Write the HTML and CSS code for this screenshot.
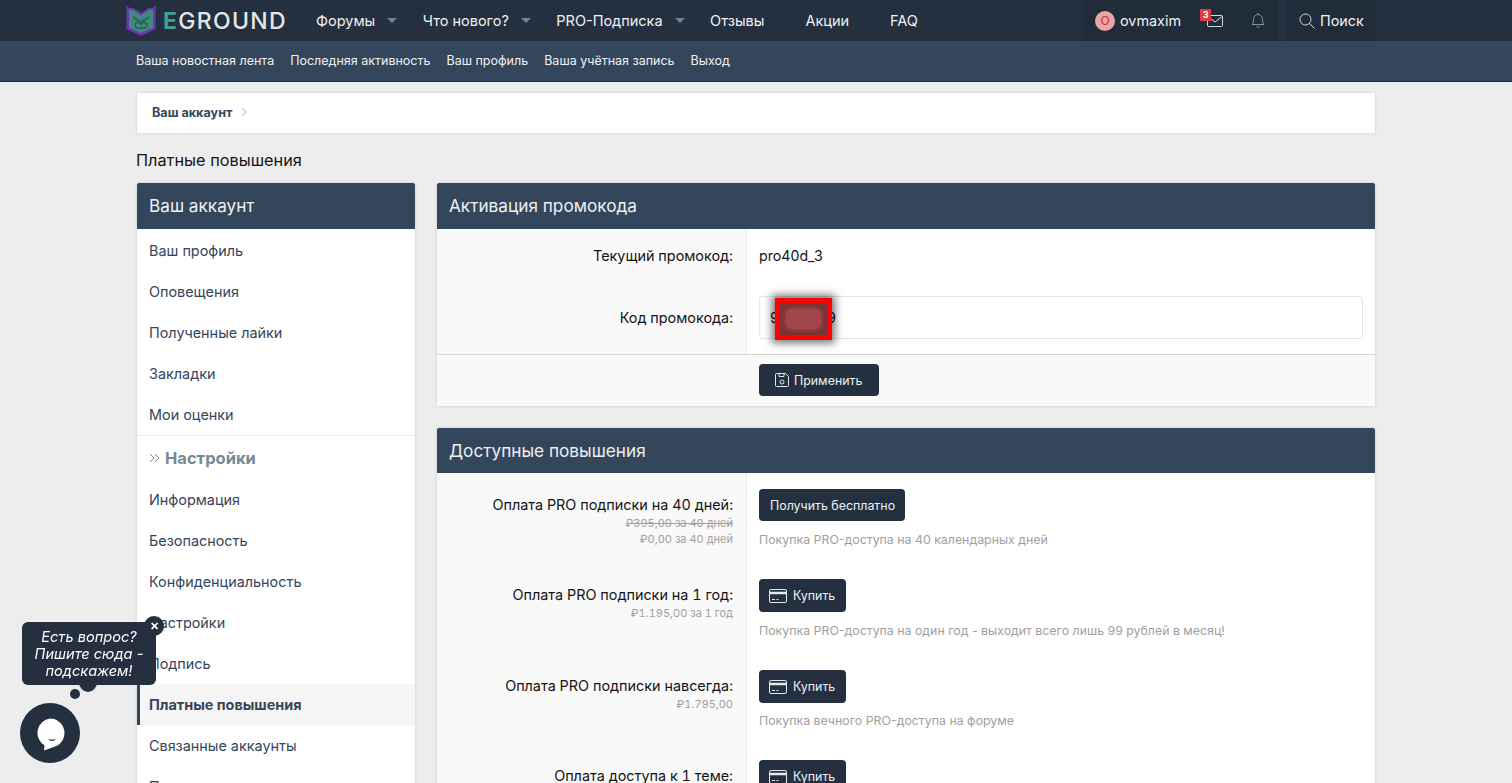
FILE: index.html
```html
<!DOCTYPE html>
<html lang="ru">
<head>
  <meta charset="utf-8">
  <title>Платные повышения</title>
  <link rel="stylesheet" href="styles.css">
</head>
<body>
  <header class="topbar">
    <div class="wrap topbar-inner">
      <a class="logo">
        <svg class="logo-mark" width="30" height="31" viewBox="0 0 30 31">
          <path d="M.5 .5l3 2.500h4L15 8l7.500-5h4l3-2.500V24L15 31 .5 24z" fill="#7034b8"/>
          <path d="M3 5h4l8 5.500L23 5h4v17.500L15 28 3 22.500z" fill="#3f8a7c"/>
          <path d="M7 12l8 5.500 8-5.500" fill="none" stroke="#2b5f5c" stroke-width="1.600"/>
          <path d="M15 22.500c-2 1.500-6 .5-6-2.500s4-3.500 6-1c2-2.500 6-2 6 1s-4 4-6 2.500z" fill="none" stroke="#2b5f5c" stroke-width="1.600"/>
        </svg>
        <span class="logo-e">E</span><span class="logo-text">GROUND</span>
      </a>
      <nav class="mainnav">
        <a class="nav-drop">Форумы<i class="caret"></i></a>
        <a class="nav-drop">Что нового?<i class="caret"></i></a>
        <a class="nav-drop">PRO-Подписка<i class="caret"></i></a>
        <a>Отзывы</a>
        <a>Акции</a>
        <a>FAQ</a>
      </nav>
      <div class="user-box">
        <span class="avatar"><span>O</span></span>
        <span class="username">ovmaxim</span>
        <span class="mail">
          <svg width="16" height="12" viewBox="0 0 16 12" fill="none" stroke="#d5d9de"><rect x=".5" y=".5" width="15" height="11" rx="1"/><path d="M1 1.500l7 5.500 7-5.500"/></svg>
          <b class="badge">3</b>
        </span>
        <svg class="bell" width="14" height="16" viewBox="0 0 14 16" fill="none" stroke="#8b949f"><path d="M1 11.500c1.500-1.500 1.500-3 1.500-5C2.500 3.500 4.500 1.500 7 1.500s4.500 2 4.500 5c0 2 0 3.500 1.500 5z"/><path d="M7 0v1.500M5.500 13.500c.8.8 2.200.8 3 0"/></svg>
      </div>
      <div class="search-box">
        <svg width="16" height="16" viewBox="0 0 16 16" fill="none" stroke="#d5d9de"><circle cx="6.500" cy="6.500" r="5.500"/><path d="M10.500 10.500l5 5"/></svg>
        <span>Поиск</span>
      </div>
    </div>
  </header>

  <div class="subbar">
    <div class="wrap subbar-inner">
      <a>Ваша новостная лента</a>
      <a>Последняя активность</a>
      <a>Ваш профиль</a>
      <a>Ваша учётная запись</a>
      <a>Выход</a>
    </div>
  </div>

  <div class="wrap">
    <div class="breadcrumb">
      <b>Ваш аккаунт</b>
      <svg class="crumb-sep" width="5" height="8" viewBox="0 0 5 8" fill="none" stroke="#a5a5a5"><path d="M.5 .5L4 4 .5 7.500"/></svg>
    </div>
    <h1 class="page-title">Платные повышения</h1>

    <div class="columns">
      <aside class="side">
        <h3 class="block-head">Ваш аккаунт</h3>
        <div class="side-list">
          <a class="side-link">Ваш профиль</a>
          <a class="side-link">Оповещения</a>
          <a class="side-link">Полученные лайки</a>
          <a class="side-link">Закладки</a>
          <a class="side-link">Мои оценки</a>
          <div class="side-group">
            <svg class="group-arrow" width="11" height="10" viewBox="0 0 11 10" fill="none" stroke="#7d8b94"><path d="M1 1l4 4-4 4M6 1l4 4-4 4"/></svg>
            <b>Настройки</b>
          </div>
          <a class="side-link">Информация</a>
          <a class="side-link">Безопасность</a>
          <a class="side-link">Конфиденциальность</a>
          <a class="side-link">Настройки</a>
          <a class="side-link">Подпись</a>
          <a class="side-link active">Платные повышения</a>
          <a class="side-link">Связанные аккаунты</a>
          <a class="side-link">Приложения</a>
        </div>
      </aside>

      <main class="main">
        <section class="block">
          <h3 class="block-head">Активация промокода</h3>
          <div class="form-row promo-current">
            <div class="form-label"><span>Текущий промокод:</span></div>
            <div class="form-value">pro40d_3</div>
          </div>
          <div class="form-row promo-code">
            <div class="form-label"><span>Код промокода:</span></div>
            <div class="form-value">
              <div class="input">
                9<span class="input-gap"></span>9
                <span class="redact"><span></span></span>
              </div>
            </div>
          </div>
          <div class="form-footer">
            <a class="button">
              <svg width="16" height="16" viewBox="0 0 16 16" fill="none" stroke="#e6e8eb"><path d="M2.500 1.500h9l3 3v9a1 1 0 0 1-1 1h-11a1 1 0 0 1-1-1v-11a1 1 0 0 1 1-1z"/><path d="M5 1.500v3h5v-3"/><circle cx="8" cy="10" r="2"/></svg>
              Применить
            </a>
          </div>
        </section>

        <section class="block">
          <h3 class="block-head short">Доступные повышения</h3>
          <div class="form-row upgrade">
            <div class="form-label">
              <span>Оплата PRO подписки на 40 дней:</span>
              <small><s>₽395,00 за 40 дней</s></small>
              <small>₽0,00 за 40 дней</small>
            </div>
            <div class="form-value">
              <a class="button">Получить бесплатно</a>
              <p class="note">Покупка PRO-доступа на 40 календарных дней</p>
            </div>
          </div>
          <div class="form-row upgrade tall">
            <div class="form-label">
              <span>Оплата PRO подписки на 1 год:</span>
              <small>₽1.195,00 за 1 год</small>
            </div>
            <div class="form-value">
              <a class="button buy"><svg class="card" width="18" height="14" viewBox="0 0 18 14" fill="none" stroke="#e6e8eb"><rect x=".5" y=".5" width="17" height="13" rx="1.500"/><path d="M1 4h16" stroke-width="2.500"/><path d="M3 10.500h3M7.500 10.500h2"/></svg>Купить</a>
              <p class="note">Покупка PRO-доступа на один год - выходит всего лишь 99 рублей в месяц!</p>
            </div>
          </div>
          <div class="form-row upgrade">
            <div class="form-label">
              <span>Оплата PRO подписки навсегда:</span>
              <small>₽1.795,00</small>
            </div>
            <div class="form-value">
              <a class="button buy"><svg class="card" width="18" height="14" viewBox="0 0 18 14" fill="none" stroke="#e6e8eb"><rect x=".5" y=".5" width="17" height="13" rx="1.500"/><path d="M1 4h16" stroke-width="2.500"/><path d="M3 10.500h3M7.500 10.500h2"/></svg>Купить</a>
              <p class="note near">Покупка вечного PRO-доступа на форуме</p>
            </div>
          </div>
          <div class="form-row upgrade">
            <div class="form-label">
              <span>Оплата доступа к 1 теме:</span>
            </div>
            <div class="form-value">
              <a class="button buy"><svg class="card" width="18" height="14" viewBox="0 0 18 14" fill="none" stroke="#e6e8eb"><rect x=".5" y=".5" width="17" height="13" rx="1.500"/><path d="M1 4h16" stroke-width="2.500"/><path d="M3 10.500h3M7.500 10.500h2"/></svg>Купить</a>
            </div>
          </div>
        </section>
      </main>
    </div>
  </div>

  <div class="chat-hint">
    Есть вопрос?<br>Пишите сюда -<br>подскажем!
    <span class="hint-close">✕</span>
    <span class="hint-dot big"></span>
    <span class="hint-dot small"></span>
  </div>
  <div class="chat-button">
    <svg width="30" height="33" viewBox="0 0 30 33"><path d="M15 .5a14.500 14.500 0 0 1 5 28.100L9 32.500l.5-5.200A14.500 14.500 0 0 1 15 .5z" fill="#fff"/><path d="M13 21.500c2 1.700 6 1.700 8 0z" fill="#24303f"/></svg>
  </div>
</body>
</html>
```

FILE: styles.css
```css
* {
  box-sizing: border-box;
}
html, body {
  height: 783px;
  overflow: hidden;
}
body {
  margin: 0;
  background: #ededed;
  color: #141414;
  font-family: Inter, "Liberation Sans", sans-serif;
  font-size: 14.4px;
}
.wrap {
  width: 1240px;
  margin: 0 auto;
}

/* top bar */
.topbar {
  height: 41px;
  background: #24303f;
  color: #f0f1f3;
}
.topbar-inner {
  display: flex;
  align-items: center;
  height: 41px;
}
.logo {
  display: flex;
  align-items: center;
  width: 160px;
  margin-left: -10px;
  flex: none;
  font-size: 23px;
  font-weight: 500;
  letter-spacing: 1.3px;
}
.logo-mark {
  flex: none;
  margin-right: 7px;
}
.logo-e {
  color: #43a08c;
  font-weight: 700;
}
.logo-text {
  color: #e4e6e8;
}
.mainnav {
  display: flex;
  flex: 1;
  margin-left: 30px;
  font-size: 14.5px;
}
.mainnav a {
  display: flex;
  align-items: center;
  margin-right: 41px;
}
.mainnav .nav-drop {
  margin-right: 25.5px;
}
.caret {
  width: 0;
  height: 0;
  margin-left: 12px;
  border: 5px solid transparent;
  border-top-color: #79838f;
  border-bottom: 0;
}
.user-box {
  display: flex;
  align-items: center;
  width: 195px;
  height: 41px;
  padding-left: 12px;
  background: #212c3a;
}
.avatar {
  display: flex;
  align-items: center;
  justify-content: center;
  width: 20px;
  height: 20px;
  border-radius: 50%;
  background: #eba5a5;
  color: #c4323a;
  font-size: 12px;
}
.username {
  margin-left: 5px;
}
.mail {
  position: relative;
  display: flex;
  margin-left: 26px;
}
.badge {
  position: absolute;
  left: -7px;
  top: -6px;
  width: 11px;
  height: 12px;
  background: #e03a3e;
  color: #fff;
  font-size: 9px;
  line-height: 12px;
  text-align: center;
}
.bell {
  margin-left: 28px;
}
.search-box {
  display: flex;
  align-items: center;
  gap: 5px;
  width: 90px;
  height: 41px;
  margin-left: 8px;
  padding-left: 13px;
  background: #212c3a;
}

/* sub bar */
.subbar {
  height: 41px;
  background: #34465c;
  border-bottom: 1px solid #1f2937;
  color: #f0f1f3;
  font-size: 12.5px;
}
.subbar-inner {
  display: flex;
  align-items: center;
  gap: 16px;
  height: 39px;
}

.breadcrumb {
  display: flex;
  align-items: center;
  width: 1238px;
  height: 40px;
  margin: 11px 0 0 1px;
  padding: 0 0 2px 15px;
  background: #fff;
  color: #34465c;
  font-size: 12.6px;
  box-shadow: 0 0 3px rgba(0, 0, 0, 0.15);
}
.crumb-sep {
  margin-left: 10px;
}
.page-title {
  margin: 17px 0 13px;
  font-size: 16.3px;
  font-weight: 400;
  line-height: 20px;
}

.columns {
  display: flex;
  gap: 22px;
  margin: 0 1px;
}
.block-head {
  height: 46px;
  margin: 0;
  padding: 0 12px;
  background: #34465c;
  color: #eef0f2;
  font-size: 17.2px;
  font-weight: 400;
  line-height: 46px;
  border-radius: 2px 2px 0 0;
}
.block-head.short {
  height: 45px;
}

/* side menu */
.side {
  width: 278px;
  flex: none;
  background: #fff;
  box-shadow: 0 0 3px rgba(0, 0, 0, 0.15);
}
.side-list {
  padding-top: 1px;
}
.side-link {
  display: block;
  height: 41px;
  padding: 0 12px;
  color: #34465c;
  line-height: 41px;
}
.side-link.active {
  border-left: 3px solid #34465c;
  padding-left: 9px;
  background: #f5f5f5;
  font-weight: 700;
}
.side-group {
  display: flex;
  align-items: center;
  height: 44px;
  padding: 0 12px;
  border-top: 1px solid #ebebeb;
  color: #748a94;
  font-size: 16.5px;
}
.group-arrow {
  margin-right: 5px;
}

/* main column */
.main {
  flex: 1;
  min-width: 0;
}
.block {
  margin-bottom: 22px;
  background: #fff;
  box-shadow: 0 0 3px rgba(0, 0, 0, 0.15);
}
.form-row {
  display: flex;
}
.form-label {
  display: flex;
  flex-direction: column;
  width: 310px;
  flex: none;
  padding: 0 13px 0 12px;
  background: #f9f9f9;
  border-right: 1px solid #ededed;
  text-align: right;
  font-variant-numeric: tabular-nums;
}
.form-label small {
  color: #a0a0a0;
  font-size: 11px;
  line-height: 16px;
}
.form-value {
  flex: 1;
  padding: 0 12px;
}
.promo-current {
  height: 55px;
  line-height: 54px;
}
.promo-current .form-value {
  font-size: 14.2px;
}
.promo-code {
  height: 71px;
  line-height: 44px;
  border-bottom: 1px solid #d6d6d6;
}
.promo-code .form-label,
.promo-code .form-value {
  padding-top: 12px;
}
.input {
  position: relative;
  height: 43px;
  padding-left: 10px;
  border: 1px solid #e6e6e6;
  border-radius: 3px;
  line-height: 41px;
}
.input-gap {
  display: inline-block;
  width: 48px;
}
.redact {
  position: absolute;
  left: 15px;
  top: 1px;
  width: 57px;
  height: 42px;
  padding: 6px;
  border: 5px solid #f00;
  background: #7a3336;
  box-shadow: 0 0 8px 3px rgba(0, 0, 0, 0.55);
}
.redact span {
  display: block;
  height: 100%;
  background: #a24649;
  border-radius: 6px;
  box-shadow: 0 0 4px 1px #a24649;
}
.form-footer {
  height: 51px;
  padding: 9px 0 0 322px;
  background: #f9f9f9;
}
.button {
  display: inline-flex;
  align-items: center;
  height: 32px;
  padding: 0 10px 0 11px;
  background: #24303f;
  color: #eef0f2;
  font-size: 12.4px;
  border-radius: 4px;
}
.form-footer .button {
  width: 120px;
  padding-left: 15px;
  gap: 4px;
}
.buy {
  gap: 6px;
  height: 33px;
  padding: 0 11px 0 10px;
}
.upgrade {
  height: 90px;
}
.upgrade.tall {
  height: 91px;
}
.upgrade .form-label {
  padding-top: 21px;
}
.upgrade .form-label span {
  line-height: 21px;
}
.upgrade .form-value {
  padding-top: 16px;
}
.note {
  margin: 11px 0 0;
  color: #a0a0a0;
  font-size: 12.35px;
  line-height: 16px;
}
.note.near {
  margin-top: 10px;
}

/* chat widget */
.chat-hint {
  position: fixed;
  left: 22px;
  top: 622px;
  width: 134px;
  height: 63px;
  padding-top: 7px;
  background: #24303f;
  border-radius: 6px;
  color: #fff;
  font-size: 14.6px;
  font-style: italic;
  line-height: 17px;
  text-align: center;
}
.hint-close {
  position: absolute;
  right: -8px;
  top: -6px;
  width: 20px;
  height: 20px;
  border-radius: 50%;
  background: #24303f;
  font-size: 11px;
  font-style: normal;
  font-weight: 700;
  line-height: 20px;
}
.hint-dot {
  position: absolute;
  z-index: -1;
  border-radius: 50%;
  background: #24303f;
}
.hint-dot.big {
  left: 57px;
  top: 50px;
  width: 18px;
  height: 20px;
}
.hint-dot.small {
  left: 48px;
  top: 67px;
  width: 10px;
  height: 10px;
}
.chat-button {
  position: fixed;
  left: 20px;
  top: 703px;
  display: flex;
  align-items: center;
  justify-content: center;
  width: 60px;
  height: 60px;
  padding-top: 3px;
  border-radius: 50%;
  background: #24303f;
}
```
